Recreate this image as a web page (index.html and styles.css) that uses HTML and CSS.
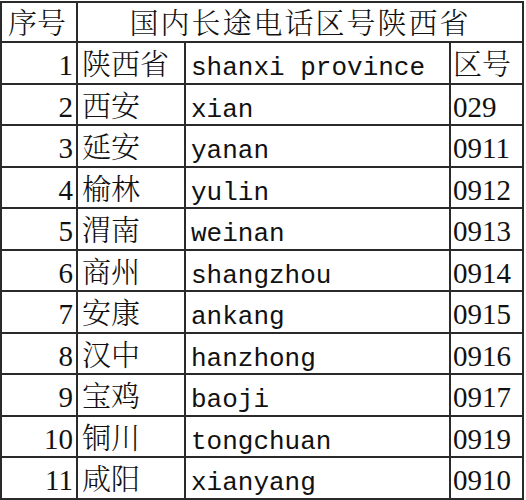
FILE: index.html
```html
<!DOCTYPE html>
<html lang="zh">
<head>
<meta charset="utf-8">
<link rel="stylesheet" href="styles.css">
</head>
<body>
<table class="sheet">
  <colgroup>
    <col class="c-no"><col class="c-name"><col class="c-py"><col class="c-code">
  </colgroup>
  <tr class="head">
    <td class="cn hno">序号</td>
    <td class="cn title" colspan="3">国内长途电话区号陕西省</td>
  </tr>
  <tr><td class="no">1</td><td class="cn">陕西省</td><td class="py">shanxi province</td><td class="cn code">区号</td></tr>
  <tr><td class="no">2</td><td class="cn">西安</td><td class="py">xian</td><td class="code">029</td></tr>
  <tr><td class="no">3</td><td class="cn">延安</td><td class="py">yanan</td><td class="code">0911</td></tr>
  <tr><td class="no">4</td><td class="cn">榆林</td><td class="py">yulin</td><td class="code">0912</td></tr>
  <tr><td class="no">5</td><td class="cn">渭南</td><td class="py">weinan</td><td class="code">0913</td></tr>
  <tr><td class="no">6</td><td class="cn">商州</td><td class="py">shangzhou</td><td class="code">0914</td></tr>
  <tr><td class="no">7</td><td class="cn">安康</td><td class="py">ankang</td><td class="code">0915</td></tr>
  <tr><td class="no">8</td><td class="cn">汉中</td><td class="py">hanzhong</td><td class="code">0916</td></tr>
  <tr><td class="no">9</td><td class="cn">宝鸡</td><td class="py">baoji</td><td class="code">0917</td></tr>
  <tr><td class="no">10</td><td class="cn">铜川</td><td class="py">tongchuan</td><td class="code">0919</td></tr>
  <tr><td class="no">11</td><td class="cn">咸阳</td><td class="py">xianyang</td><td class="code">0910</td></tr>
</table>
</body>
</html>
```
FILE: styles.css
```css
html, body {
  margin: 0;
  padding: 0;
  background: #fff;
}
body {
  padding: 1px 0 0 0;
  color: #111;
}
.sheet {
  border-collapse: collapse;
  table-layout: fixed;
  width: 522px;
  margin-left: 0;
}
.c-no { width: 76px; }
.c-name { width: 108px; }
.c-py { width: 265px; }
.c-code { width: 73px; }
.sheet td {
  border: 2px solid #2a2a2a;
  height: 41.5px;
  padding: 5px 4px 0 4px;
  box-sizing: border-box;
  vertical-align: baseline;
  white-space: nowrap;
  font-family: "Liberation Serif", "Noto Serif CJK SC", "Noto Sans CJK SC", serif;
  font-size: 29px;
  line-height: 1;
}
.sheet tr.head td {
  height: 40px;
  padding-top: 4px;
}
.sheet td.cn {
  font-family: "Noto Serif CJK SC", "Noto Sans CJK SC", serif;
  font-size: 29px;
  font-weight: 300;
}
.sheet td.hno { padding-left: 6px; }
.sheet td.title {
  text-align: center;
  letter-spacing: 2px;
}
.sheet td.no {
  text-align: right;
  padding-right: 3px;
}
.sheet td.py {
  font-family: "Liberation Mono", monospace;
  font-size: 26px;
  padding-left: 5px;
}
.sheet td.code { padding-left: 2px; }
```
